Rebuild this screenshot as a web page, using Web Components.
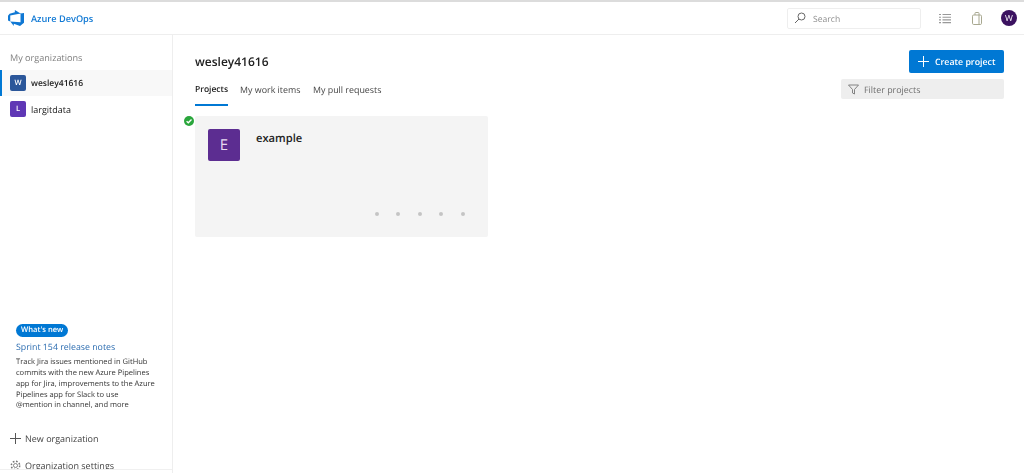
<!DOCTYPE html>
<html>
<head>
<meta charset="utf-8">
<title>Azure DevOps</title>
<style>
  html, body { margin: 0; padding: 0; height: 473px; overflow: hidden; background: #fff; }
  body { font-family: "Open Sans", "Noto Sans", sans-serif; font-size: 9px; color: #222; text-rendering: geometricPrecision; }
</style>
</head>
<body>
<ado-app></ado-app>

<script>
class AdoHeader extends HTMLElement {
    constructor() {
        super();
        this.attachShadow({mode: 'open'});
        this.shadowRoot.innerHTML = `
            <style>
                :host { display: flex; align-items: center; box-sizing: border-box; border-top: 2px solid #dcdcdc; border-bottom: 1px solid #eee; padding: 0 7px 0 7px; height: 35px; }
                .logo { display: block; width: 18px; height: 18px; margin-right: 6px; }
                .name { color: #0f78d4; font-size: 9.200px; font-weight: 600; flex: 1; }
                .search { width: 134px; height: 21px; box-sizing: border-box; border: 1px solid #eee; border-radius: 2px; display: flex; align-items: center; padding-left: 6px; color: #8f8f8f; font-size: 8.600px; gap: 7px; margin-right: 18px; }
                .search span { padding-top: 1px; }
                .tool { width: 12px; height: 13px; display: block; }
                .list { margin-right: 20px; }
                .bag { margin-right: 18px; }
                .avatar { width: 16px; height: 16px; border-radius: 50%; background: #3b1260; color: #fff; font-size: 8.500px; display: flex; align-items: center; justify-content: center; }
            </style>
            <svg class="logo" viewBox="0 0 18 18"><path fill="#0f78d4" d="M17 4v9.740l-4 3.280-6.200-2.260V17l-3.510-4.590 10.230.8V4.440L17 4zm-3.410.490L7.850 1v2.290L2.580 4.840 1 6.870v4.610l2.260 1V6.570l10.330-2.080z"/></svg>
            <span class="name">Azure DevOps</span>
            <div class="search">
                <svg width="12" height="12" viewBox="0 0 12 12" fill="none" stroke="#666" stroke-width="1"><circle cx="7.500" cy="4.500" r="3.500"/><path d="M5 7 1 11"/></svg>
                <span>Search</span>
            </div>
            <svg class="tool list" viewBox="0 0 12 13" fill="none" stroke="#999" stroke-width="1.100"><path d="M0 2.500h2M3.500 2.500H12M0 5.200h2M3.500 5.200H12M0 7.900h2M3.500 7.900H12M0 10.600h2M3.500 10.600H12"/></svg>
            <svg class="tool bag" viewBox="0 0 12 13" fill="none" stroke="#a8a890" stroke-width="1"><rect x="1.500" y="3" width="9" height="9.500" rx="1.200"/><path d="M4 3V1.200Q4 .5 4.700 .5h2.600Q8 .5 8 1.200V12.500"/></svg>
            <div class="avatar">W</div>
        `;
    }
}

class AdoOrgItem extends HTMLElement {
    constructor() {
        super();
        this.attachShadow({mode: 'open'});
        this.shadowRoot.innerHTML = `
            <style>
                :host { display: flex; align-items: center; height: 26px; padding-left: 10px; gap: 5px; font-size: 9px; box-sizing: border-box; color: #222; }
                :host([selected]) { background: #f8f8f8; border-left: 2px solid #0078d4; padding-left: 8px; font-size: 8.500px; font-weight: 600; }
                .badge { width: 16px; height: 16px; border-radius: 2px; color: #fff; font-size: 7.500px; font-weight: 600; display: flex; align-items: center; justify-content: center; }
            </style>
            <div class="badge"></div>
            <slot></slot>
        `;
    }
    connectedCallback() {
        this.shadowRoot.querySelector('.badge').textContent = this.getAttribute('letter');
        this.shadowRoot.querySelector('.badge').style.background = this.getAttribute('color');
    }
}

class AdoSidebar extends HTMLElement {
    constructor() {
        super();
        this.attachShadow({mode: 'open'});
        this.shadowRoot.innerHTML = `
            <style>
                :host { display: block; width: 173px; box-sizing: border-box; border-right: 1px solid #eee; height: 438px; }
                .clip { height: 434px; overflow: hidden; border-bottom: 1px solid #f0f0f0; }
                .content { display: flex; flex-direction: column; height: 437px; }
                .title { color: #808080; font-size: 9.100px; padding: 16px 0 5px 10px; line-height: 14px; }
                .orgs { display: flex; flex-direction: column; flex: 1; }
                .news { padding: 0 10px 0 16px; display: flex; flex-direction: column; align-items: flex-start; }
                .pill { background: #0078d4; color: #fff; font-size: 7.600px; border-radius: 7px; padding: 0 5px; height: 13px; line-height: 13px; font-weight: 600; }
                .link { color: #2b6cb0; font-size: 8.800px; margin-top: 3px; line-height: 14px; }
                .text { font-size: 7.550px; line-height: 10.750px; color: #333; margin-top: 3px; white-space: nowrap; }
                .action { display: flex; align-items: center; gap: 4px; font-size: 9px; color: #444; height: 14px; padding-left: 10px; }
                .new { margin-top: 20px; }
                .settings { margin-top: 13px; }
            </style>
            <div class="clip">
                <div class="content">
                    <div class="title">My organizations</div>
                    <div class="orgs">
                        <slot></slot>
                    </div>
                    <div class="news">
                        <span class="pill">What's new</span>
                        <span class="link">Sprint 154 release notes</span>
                        <div class="text">Track Jira issues mentioned in GitHub<br>commits with the new Azure Pipelines<br>app for Jira, improvements to the Azure<br>Pipelines app for Slack to use<br>@mention in channel, and more</div>
                    </div>
                    <div class="action new"><svg width="11" height="11" viewBox="0 0 11 11" stroke="#555" stroke-width="1"><path d="M5.500 0v11M0 5.500h11"/></svg>New organization</div>
                    <div class="action settings"><svg width="11" height="11" viewBox="0 0 11 11" fill="none" stroke="#777"><circle cx="5.500" cy="5.500" r="2" stroke-width=".9"/><circle cx="5.500" cy="5.500" r="4.200" stroke-width="1.500" stroke-dasharray="1.700 1.600"/></svg>Organization settings</div>
                </div>
            </div>
        `;
    }
}

class AdoTabs extends HTMLElement {
    constructor() {
        super();
        this.attachShadow({mode: 'open'});
        this.shadowRoot.innerHTML = `
            <style>
                :host { display: flex; gap: 12px; font-size: 8.900px; color: #444; }
                span { padding: 0 0 7px; line-height: 14px; }
                span + span + span { margin-left: .5px; }
                .on { color: #222; font-size: 8.500px; font-weight: 600; border-bottom: 2px solid #0078d4; }
            </style>
            <span class="on">Projects</span>
            <span>My work items</span>
            <span>My pull requests</span>
        `;
    }
}

class AdoProjectCard extends HTMLElement {
    constructor() {
        super();
        this.attachShadow({mode: 'open'});
        this.shadowRoot.innerHTML = `
            <style>
                :host { display: block; position: relative; width: 293px; height: 121px; background: #f4f4f4; border-radius: 2px; box-sizing: border-box; padding: 13px; }
                .check { position: absolute; left: -11px; top: 0; width: 10px; height: 10px; }
                .top { display: flex; gap: 16px; }
                .tile { width: 32px; height: 32px; border-radius: 2px; background: #5c2d91; color: #e6daf0; font-size: 15px; display: flex; align-items: center; justify-content: center; }
                .name { font-size: 11.200px; font-weight: 600; color: #222; line-height: 18px; padding-top: 1px; }
                .dots { position: absolute; right: 23.500px; bottom: 20.700px; display: flex; gap: 17.350px; }
                .dots i { width: 4px; height: 4px; border-radius: 50%; background: #c4c4c4; }
            </style>
            <svg class="check" viewBox="0 0 10 10"><circle cx="5" cy="5" r="5" fill="#2aa63c"/><path d="M2.600 5.200 4.300 6.800 7.500 3.500" fill="none" stroke="#fff" stroke-width="1.300"/></svg>
            <div class="top">
                <div class="tile">E</div>
                <div class="name"><slot></slot></div>
            </div>
            <div class="dots"><i></i><i></i><i></i><i></i><i></i></div>
        `;
    }
}

class AdoMain extends HTMLElement {
    constructor() {
        super();
        this.attachShadow({mode: 'open'});
        this.shadowRoot.innerHTML = `
            <style>
                :host { display: block; flex: 1; box-sizing: border-box; padding: 15px 20px 0 22px; }
                .row { display: flex; justify-content: space-between; align-items: flex-start; }
                h1 { margin: 0; font-size: 12px; font-weight: 600; color: #222; line-height: 24px; }
                .create { background: #0078d4; color: #fff; width: 95px; height: 23px; border-radius: 2px; display: flex; align-items: center; gap: 6px; font-size: 8.800px; font-weight: 600; box-sizing: border-box; padding-left: 9px; }
                .tabs { margin-top: 5px; }
                .filter { width: 163px; height: 20px; background: #eeeeee; border-radius: 2px; box-sizing: border-box; display: flex; align-items: center; gap: 5px; padding-left: 7px; color: #6e6e6e; font-size: 8.900px; }
                .label { padding-top: 4px; }
                .cards { margin-top: 10px; }
            </style>
            <div class="row">
                <h1>wesley41616</h1>
                <div class="create"><svg width="11" height="11" viewBox="0 0 11 11" stroke="#fff" stroke-width="1"><path d="M5.500 0v11M0 5.500h11"/></svg>Create project</div>
            </div>
            <div class="row tabs">
                <ado-tabs class="label"></ado-tabs>
                <div class="filter"><svg width="11" height="11" viewBox="0 0 11 11" fill="none" stroke="#777" stroke-width=".9"><path d="M.5 1h10L6.500 5.500V10L4.500 9V5.500z"/></svg>Filter projects</div>
            </div>
            <div class="cards"><ado-project-card>example</ado-project-card></div>
        `;
    }
}

class AdoApp extends HTMLElement {
    constructor() {
        super();
        this.attachShadow({mode: 'open'});
        this.shadowRoot.innerHTML = `
            <style>
                :host { display: block; height: 473px; overflow: hidden; filter: blur(.3px); }
                .body { display: flex; }
            </style>
            <ado-header></ado-header>
            <div class="body">
                <ado-sidebar>
                    <ado-org-item selected letter="W" color="#2b579a">wesley41616</ado-org-item>
                    <ado-org-item letter="L" color="#5f37b5">largitdata</ado-org-item>
                </ado-sidebar>
                <ado-main></ado-main>
            </div>
        `;
    }
}

customElements.define('ado-header', AdoHeader);
customElements.define('ado-org-item', AdoOrgItem);
customElements.define('ado-sidebar', AdoSidebar);
customElements.define('ado-tabs', AdoTabs);
customElements.define('ado-project-card', AdoProjectCard);
customElements.define('ado-main', AdoMain);
customElements.define('ado-app', AdoApp);
</script>
</body>
</html>
